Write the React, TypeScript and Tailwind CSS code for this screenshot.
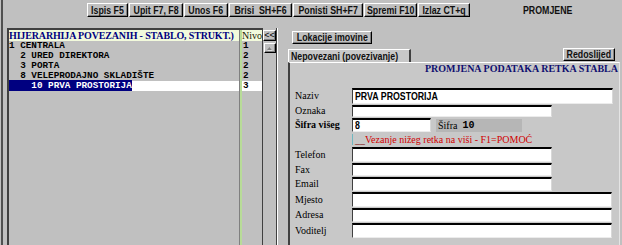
import React from 'react';

const sans = "font-['Liberation_Sans',Arial,sans-serif]";
const serif = "font-['Liberation_Serif','Times_New_Roman',serif]";
const mono = "font-['Liberation_Mono','Courier_New',monospace]";

const raised =
  'bg-[#c0c0c0] border border-t-white border-l-white border-r-black border-b-black shadow-[inset_-1px_-1px_0_#808080]';

// condensed bold UI text (the original uses a narrow bitmap face)
const Narrow = ({ children, left }: { children: React.ReactNode; left?: boolean }) => (
  <span className={`inline-block whitespace-nowrap scale-x-[0.8] ${left ? 'origin-left' : 'origin-center'}`}>{children}</span>
);

const Btn = ({ className, children }: { className: string; children: React.ReactNode }) => (
  <div className={`${raised} ${sans} ${className} flex items-center justify-center text-[11px] font-bold leading-none text-[#101010] whitespace-nowrap`}>
    <Narrow>{children}</Narrow>
  </div>
);

const TREE = [
  { text: '1 CENTRALA', nivo: '1' },
  { text: '  2 URED DIREKTORA', nivo: '2' },
  { text: '  3 PORTA', nivo: '2' },
  { text: '  8 VELEPRODAJNO SKLADIŠTE', nivo: '2' },
  { text: '    10 PRVA PROSTORIJA', nivo: '3', selected: true },
];

const field =
  'bg-white border-t-2 border-t-black border-l border-l-[#404040] border-r border-r-[#d8d8d8] border-b border-b-[#ececec] flex items-center overflow-hidden';

const Label = ({ children, bold }: { children: React.ReactNode; bold?: boolean }) => (
  <div className={`w-[57px] shrink-0 ${serif} text-[10px] leading-none text-black whitespace-nowrap ${bold ? 'font-bold' : ''}`}>{children}</div>
);

export default function App() {
  return (
    <div className="w-[622px] h-[245px] bg-[#c0c0c0] flex overflow-hidden select-none">
      {/* window edge */}
      <div className="w-px" />
      <div className="w-[2px] bg-[#505050]" />

      <div className="flex-1 flex flex-col min-w-0">
        {/* toolbar */}
        <div className="h-[28px] flex items-start pt-[3px] pl-[84px] gap-px">
          <Btn className="w-[41px] h-[14px]">Ispis F5</Btn>
          <Btn className="w-[54px] h-[14px]">Upit F7, F8</Btn>
          <Btn className="w-[44px] h-[14px]">Unos F6</Btn>
          <Btn className="w-[63px] h-[14px]">Brisi&nbsp;&nbsp;SH+F6</Btn>
          <Btn className="w-[70px] h-[14px]">Ponisti SH+F7</Btn>
          <Btn className="w-[53px] h-[14px]">Spremi F10</Btn>
          <Btn className="w-[52px] h-[14px]">Izlaz CT+q</Btn>
          <div className={`ml-[52px] h-[14px] flex items-center ${sans} text-[11px] font-bold text-[#101010]`}>
            <Narrow left>PROMJENE</Narrow>
          </div>
        </div>

        {/* body */}
        <div className="flex-1 flex min-h-0">
          {/* tree list */}
          <div className="ml-[4px] w-[256px] border-l-2 border-t-2 border-r border-[#404040] flex flex-col">
            <div className="h-[11px] flex">
              <div className={`w-[230px] bg-[#f2fadc] ${serif} text-[10px] font-bold leading-[11px] tracking-[-0.15px] text-[#000080] whitespace-nowrap overflow-hidden`}>
                HIJERARHIJA POVEZANIH - STABLO, STRUKT.)
              </div>
              <div className="w-px bg-[#808080]" />
              <div className="w-[2px] bg-[#b8dc98]" />
              <div className={`w-[20px] bg-[#f2fadc] ${serif} text-[10px] leading-[11px] text-[#202000] whitespace-nowrap overflow-hidden`}>Nivo</div>
            </div>
            {TREE.map((r) => (
              <div key={r.text} className={`h-[10px] flex ${mono} text-[9.3px] font-bold leading-[10px]`}>
                <div className={`w-[230px] whitespace-pre ${r.selected ? 'bg-white' : ''}`}>
                  {r.selected ? <span className="bg-[#000080] text-white">{r.text}</span> : <span className="text-black">{r.text}</span>}
                </div>
                <div className="w-px bg-[#808080]" />
                <div className="w-[2px] bg-[#b8dc98]" />
                <div className={`w-[20px] pl-px text-black ${r.selected ? 'bg-white' : ''}`}>{r.nivo}</div>
              </div>
            ))}
            <div className="flex-1 flex">
              <div className="w-[230px]" />
              <div className="w-px bg-[#808080]" />
              <div className="w-[2px] bg-[#b8dc98]" />
              <div className="w-[20px]" />
            </div>
          </div>

          {/* scroll column */}
          <div className="w-[14px] border-r border-[#404040] flex flex-col items-center">
            <div className={`${raised} mt-[2px] w-[13px] h-[11px] flex items-center justify-center ${sans} text-[9px] leading-none text-black`}>&lt;&lt;</div>
            <div className={`${raised} mt-[2px] w-[12px] h-[10px] flex items-center justify-center`}>
              <svg width="7" height="5" viewBox="0 0 7 5">
                <path d="M1.5 4.5 L6.5 4.5 L4 1.5 Z" fill="#ffffff" />
                <path d="M1 4 L6 4 L3.5 1 Z" fill="#808080" />
              </svg>
            </div>
          </div>
          <div className="w-px bg-white" />
          <div className="w-[9px]" />

          {/* right side */}
          <div className="w-[334px] flex flex-col">
            <Btn className="mt-[3px] ml-[5px] w-[80px] h-[13px]">Lokacije imovine</Btn>
            <div className="mt-[4px] h-[14px] flex items-end">
              <div className={`ml-px w-[123px] h-[13px] bg-[#c8c8c8] border-t border-l border-t-white border-l-white border-r-2 border-r-[#404040] flex items-center pl-[2px] ${sans} text-[11px] font-bold leading-none text-[#101010] overflow-hidden`}>
                <Narrow left>Nepovezani (povezivanje)</Narrow>
              </div>
              <Btn className="ml-[152px] mb-px w-[52px] h-[13px]">Redoslijed</Btn>
            </div>

            <div className="flex-1 ml-px w-[332px] bg-[#c8c8c8] border-l-2 border-l-[#404040] border-t border-t-white border-r border-r-[#e4e4e4] flex flex-col pl-[5px]">
              <div className={`h-[12px] pr-px text-right ${serif} text-[10px] font-bold leading-[12px] text-[#101070] whitespace-nowrap`}>
                PROMJENA PODATAKA RETKA STABLA
              </div>

              <div className="mt-[13px] h-[16px] flex items-center">
                <Label>Naziv</Label>
                <div className={`${field} w-[261px] h-[16px] pl-[2px] ${sans} text-[11px] font-bold text-black`}>
                  <Narrow left>PRVA PROSTORIJA</Narrow>
                </div>
              </div>
              <div className="mt-px h-[12px] flex items-center">
                <Label>Oznaka</Label>
                <div className={`${field} w-[200px] h-[12px]`} />
              </div>
              <div className="mt-px h-[14px] flex items-center">
                <Label bold>Šifra višeg</Label>
                <div className={`${field} w-[79px] h-[14px] pl-[2px] ${sans} text-[11px] font-bold text-black`}>
                  <Narrow left>8</Narrow>
                </div>
                <div className="ml-[5px] w-[86px] h-[13px] bg-[#b6b6b6] flex items-center pl-[2px] text-black">
                  <span className={`${serif} text-[10px]`}>Šifra</span>
                  <span className={`${mono} text-[10px] font-bold ml-[5px]`}>10</span>
                </div>
              </div>
              <div className="h-[15px] flex items-center">
                <div className="w-[57px] shrink-0" />
                <div className="w-px h-[11px] bg-[#70b8c0]" />
                <span className={`${serif} text-[10px] leading-none text-[#7a0000] ml-[2px]`}>__</span>
                <span className={`${serif} text-[10px] leading-none text-[#d00000] whitespace-nowrap`}>Vezanje nižeg retka na viši - F1=POMOĆ</span>
              </div>
              <div className="h-[15px] flex items-center">
                <Label>Telefon</Label>
                <div className={`${field} w-[200px] h-[15px]`} />
              </div>
              <div className="mt-px h-[13px] flex items-center">
                <Label>Fax</Label>
                <div className={`${field} w-[200px] h-[13px]`} />
              </div>
              <div className="mt-px h-[14px] flex items-center">
                <Label>Email</Label>
                <div className={`${field} w-[200px] h-[14px]`} />
              </div>
              <div className="mt-px h-[15px] flex items-center">
                <Label>Mjesto</Label>
                <div className={`${field} w-[260px] h-[15px]`} />
              </div>
              <div className="mt-px h-[14px] flex items-center">
                <Label>Adresa</Label>
                <div className={`${field} w-[260px] h-[14px]`} />
              </div>
              <div className="mt-px h-[15px] flex items-center">
                <Label>Voditelj</Label>
                <div className={`${field} w-[260px] h-[15px]`} />
              </div>
            </div>
          </div>
        </div>
      </div>
    </div>
  );
}
